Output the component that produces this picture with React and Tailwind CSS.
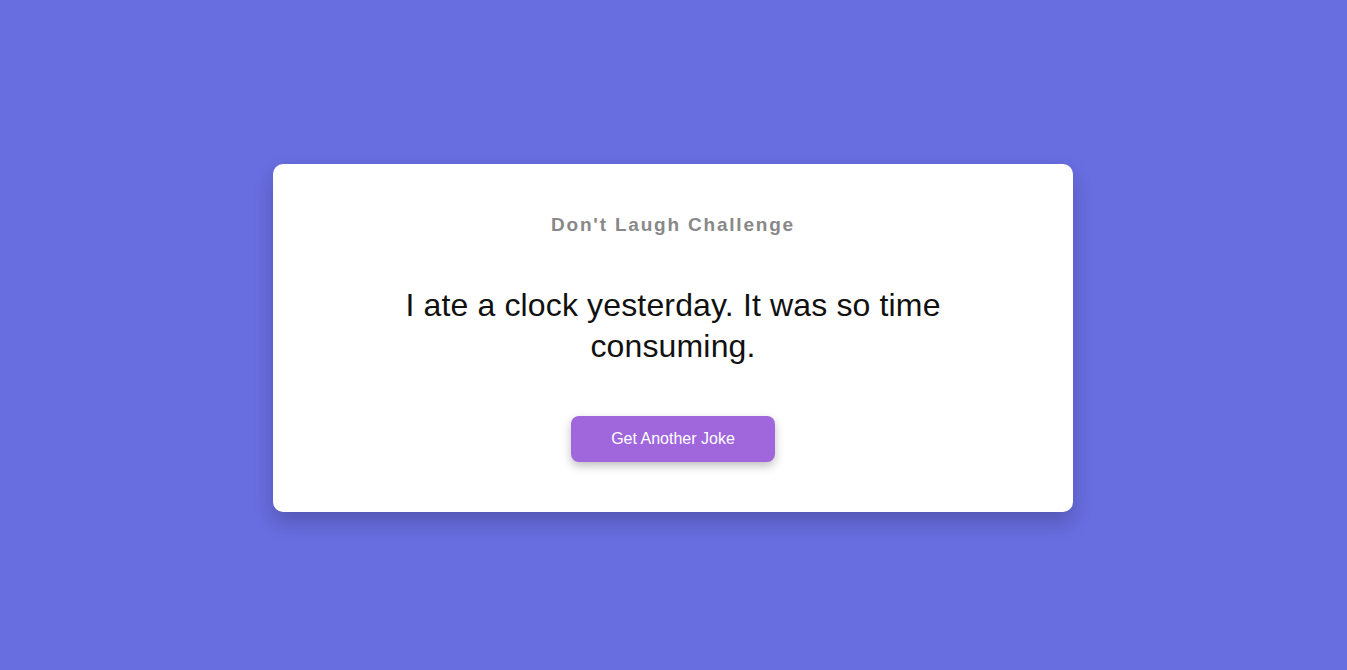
export default function App() {
  return (
    <div
      className="min-h-screen w-full bg-[#686de0] flex items-center justify-center pt-[6px] pr-[1px]"
      style={{ fontFamily: '"Liberation Sans", Arial, sans-serif' }}
    >
      <div className="w-[800px] bg-white rounded-[10px] shadow-[0_10px_20px_rgba(0,0,0,0.2)] px-[40px] pt-[50px] pb-[50px] flex flex-col items-center text-center">
        <h1 className="text-[19px] leading-[22px] font-bold tracking-[1.8px] text-[#888888]">
          Don't Laugh Challenge
        </h1>
        <p className="mt-[49px] max-w-[600px] text-[32px] leading-[41px] tracking-[0.15px] text-[#111111]">
          I ate a clock yesterday. It was so time consuming.
        </p>
        <button className="mt-[49px] h-[46px] w-[204px] rounded-[8px] bg-[#a067dd] text-white text-[16px] shadow-[0_4px_10px_rgba(0,0,0,0.25)]">
          Get Another Joke
        </button>
      </div>
    </div>
  );
}
